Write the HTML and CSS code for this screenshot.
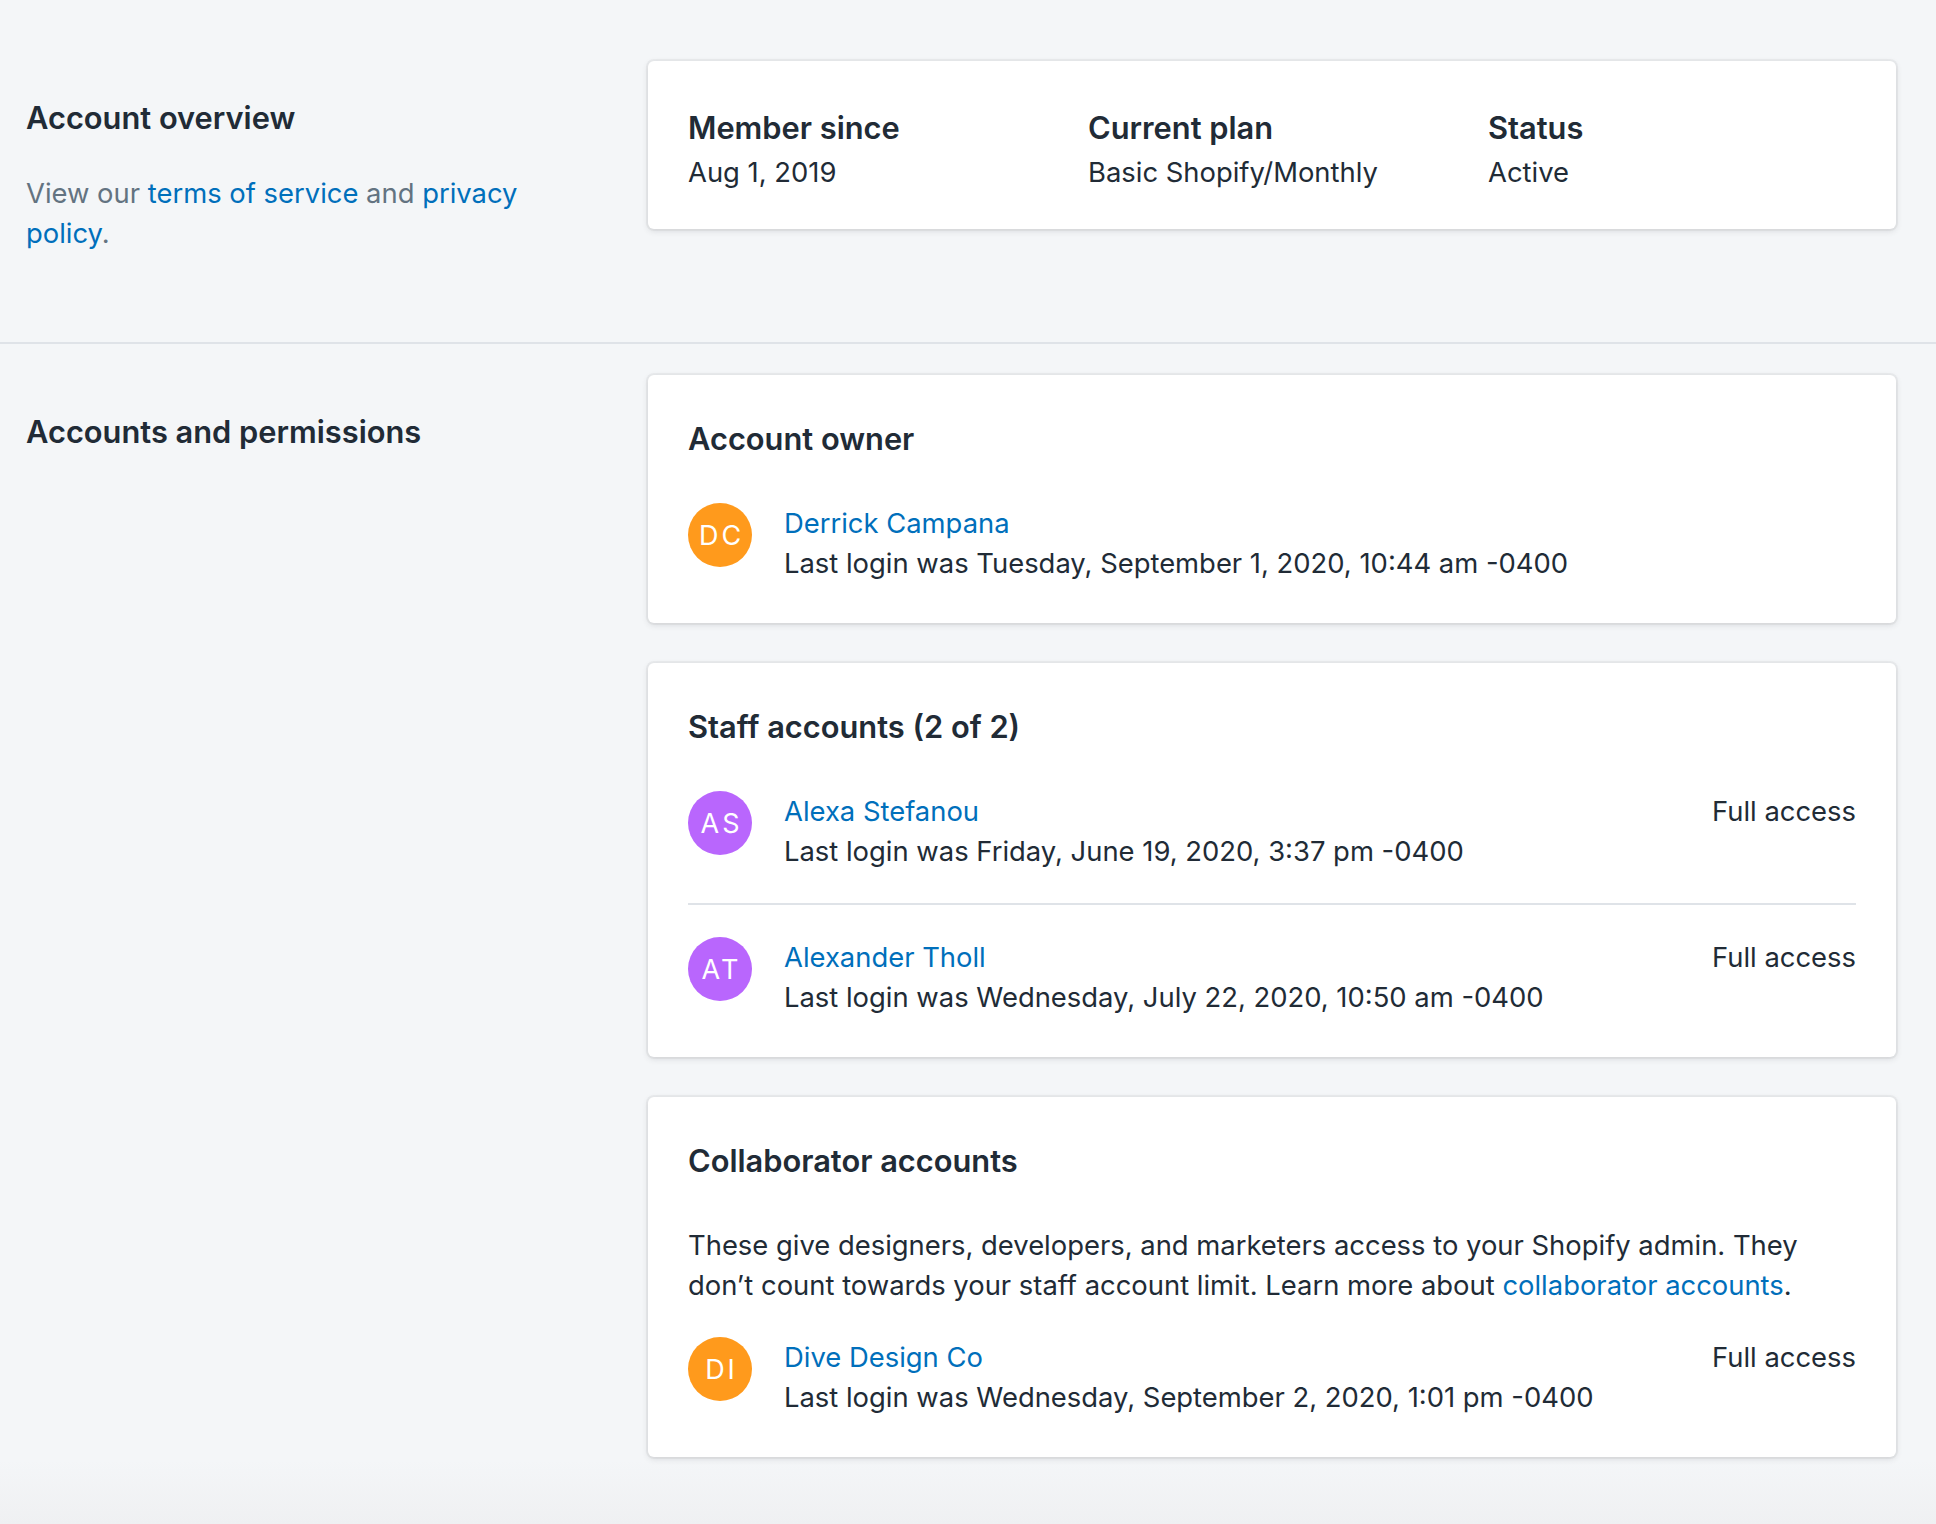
FILE: index.html
```html
<!DOCTYPE html>
<html lang="en">
<head>
<meta charset="utf-8">
<title>Account</title>
<link rel="stylesheet" href="styles.css">
</head>
<body>
<main class="page">
  <section class="annotated annotated--first">
    <div class="annotation">
      <h2 class="annotation__title">Account overview</h2>
      <p class="annotation__desc">View our <a href="#" class="link">terms of service</a> and <a href="#" class="link">privacy policy</a>.</p>
    </div>
    <div class="content">
      <div class="card card--overview">
        <div class="overview">
          <div class="overview__item">
            <h3 class="card__title">Member since</h3>
            <p class="text">Aug 1, 2019</p>
          </div>
          <div class="overview__item">
            <h3 class="card__title">Current plan</h3>
            <p class="text">Basic Shopify/Monthly</p>
          </div>
          <div class="overview__item">
            <h3 class="card__title">Status</h3>
            <p class="text">Active</p>
          </div>
        </div>
      </div>
    </div>
  </section>

  <hr class="divider">

  <section class="annotated annotated--second">
    <div class="annotation">
      <h2 class="annotation__title">Accounts and permissions</h2>
    </div>
    <div class="content">
      <div class="card">
        <h3 class="card__title">Account owner</h3>
        <div class="card__section">
          <div class="account">
            <div class="avatar avatar--orange">DC</div>
            <div class="account__info">
              <a href="#" class="link account__name">Derrick Campana</a>
              <p class="text">Last login was Tuesday, September 1, 2020, 10:44 am -0400</p>
            </div>
          </div>
        </div>
      </div>

      <div class="card">
        <h3 class="card__title">Staff accounts (2 of 2)</h3>
        <ul class="account-list card__section">
          <li class="account account--item">
            <div class="avatar avatar--purple">AS</div>
            <div class="account__info">
              <a href="#" class="link account__name">Alexa Stefanou</a>
              <p class="text">Last login was Friday, June 19, 2020, 3:37 pm -0400</p>
            </div>
            <span class="account__access">Full access</span>
          </li>
          <li class="account account--item">
            <div class="avatar avatar--purple">AT</div>
            <div class="account__info">
              <a href="#" class="link account__name">Alexander Tholl</a>
              <p class="text">Last login was Wednesday, July 22, 2020, 10:50 am -0400</p>
            </div>
            <span class="account__access">Full access</span>
          </li>
        </ul>
      </div>

      <div class="card">
        <h3 class="card__title">Collaborator accounts</h3>
        <div class="card__section">
          <p class="text">These give designers, developers, and marketers access to your Shopify admin. They don’t count towards your staff account limit. Learn more about <a href="#" class="link">collaborator accounts</a>.</p>
          <div class="collab__list">
            <div class="account">
              <div class="avatar avatar--orange">DI</div>
              <div class="account__info">
                <a href="#" class="link account__name">Dive Design Co</a>
                <p class="text">Last login was Wednesday, September 2, 2020, 1:01 pm -0400</p>
              </div>
              <span class="account__access">Full access</span>
            </div>
          </div>
        </div>
      </div>
    </div>
  </section>
</main>
</body>
</html>
```

FILE: styles.css
```css
* {
  box-sizing: border-box;
}

html, body {
  margin: 0;
  padding: 0;
}

body {
  background: #f4f6f8;
  color: #212b36;
  font-family: Inter, "Noto Sans", "Liberation Sans", sans-serif;
  font-size: 27.4px;
  line-height: 40px;
}

.page {
  width: 1936px;
  min-height: 1524px;
  background: linear-gradient(to bottom, #f4f6f8 0, #f4f6f8 1460px, #eff0f2 1524px);
}

.annotated {
  display: flex;
  padding-left: 26px;
  padding-right: 40px;
}

.annotated--first {
  padding-top: 61px;
  padding-bottom: 89px;
}

.annotated--second {
  padding-top: 31px;
}

.annotation {
  width: 562px;
  flex: none;
  padding-top: 33px;
}

.annotation__title {
  margin: 0;
  font-size: 30.8px;
  line-height: 48px;
  font-weight: 600;
}

.annotation__desc {
  margin: 31px 0 0;
  color: #637381;
}

.link {
  color: #006fbb;
  text-decoration: none;
}

.content {
  margin-left: 60px;
  width: 1248px;
  display: flex;
  flex-direction: column;
  gap: 40px;
}

.card {
  background: #ffffff;
  border-radius: 6px;
  box-shadow: 0 0 0 2px rgba(63, 63, 68, 0.05), 0 2px 6px 0 rgba(63, 63, 68, 0.15);
  padding: 40px;
}

.card--overview {
  padding-top: 43px;
  padding-bottom: 37px;
}

.card__title {
  margin: 0;
  font-size: 30.8px;
  line-height: 48px;
  font-weight: 600;
}

.text {
  margin: 0;
}

.card__section {
  margin-top: 40px;
}

.overview {
  display: grid;
  grid-template-columns: repeat(3, 1fr);
  column-gap: 32px;
}

.account {
  display: flex;
  align-items: flex-start;
  gap: 32px;
}

.account__info {
  flex: 1;
  min-width: 0;
}

.account__name {
  display: block;
}

.account__access {
  flex: none;
}

.account-list {
  list-style: none;
  padding: 0;
  margin-bottom: 0;
}

.account--item + .account--item {
  border-top: 2px solid #dfe3e8;
  margin-top: 32px;
  padding-top: 32px;
}

.collab__list {
  margin-top: 32px;
}

.avatar {
  width: 64px;
  height: 64px;
  flex: none;
  border-radius: 50%;
  color: #ffffff;
  display: flex;
  align-items: center;
  justify-content: center;
  font-size: 27px;
  line-height: 1;
  letter-spacing: 3px;
  padding-left: 3px;
  font-weight: 400;
}

.avatar--orange {
  background: #ff9a1c;
}

.avatar--purple {
  background: #b966fd;
}

.divider {
  margin: 0;
  border: 0;
  height: 2px;
  background: #dfe3e8;
}
```
